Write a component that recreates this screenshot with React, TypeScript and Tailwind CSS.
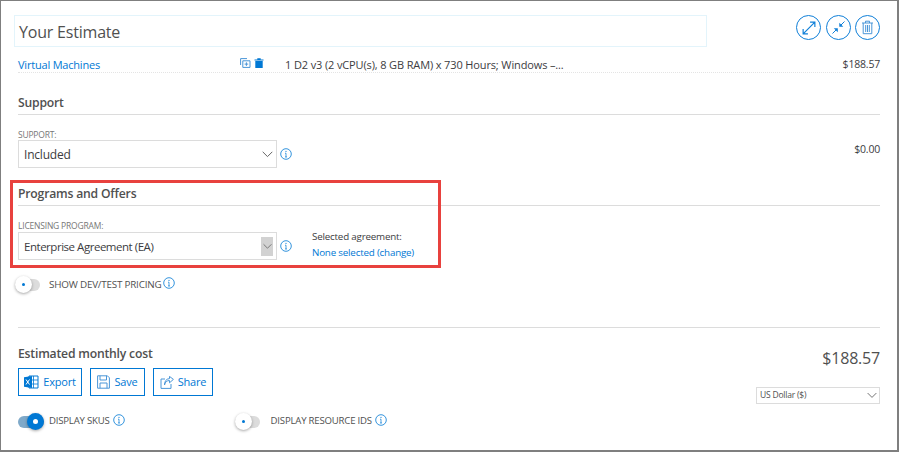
import React from "react";

function Info({ className = "" }: { className?: string }) {
  return (
    <svg viewBox="0 0 12 12" className={`w-[12px] h-[12px] shrink-0 ${className}`} fill="none" stroke="#0078d4" strokeWidth="0.8">
      <circle cx="6" cy="6" r="5.3" />
      <path d="M6 5.2V9M5 9h2M5 5.2h1" strokeWidth="0.7" />
      <circle cx="6" cy="3.3" r="0.6" fill="#0078d4" stroke="none" />
    </svg>
  );
}

function Chevron({ w = 11 }: { w?: number }) {
  return (
    <svg width={w} height="7" viewBox="0 0 11 7" fill="none" stroke="#666" strokeWidth="1">
      <path d="M0.7 0.8 5.5 5.6 10.3 0.8" />
    </svg>
  );
}

function Select({ text, highlighted = false }: { text: string; highlighted?: boolean }) {
  return (
    <div className="w-[259px] h-[28px] border-[1.5px] border-[#dcdcdc] flex items-center justify-between pl-[5px] pr-[3px] text-[#3c3c41] bg-white">
      {highlighted ? (
        <span className="text-[11.5px] tracking-[-0.47px] pt-[1px]">{text}</span>
      ) : (
        <span className="text-[12px] pt-[2px]">{text}</span>
      )}
      {highlighted ? (
        <span className="w-[12px] h-[19px] bg-[#d2d2d2] flex items-center justify-center"><Chevron w={9} /></span>
      ) : (
        <span className="w-[12px] flex items-center justify-center"><Chevron /></span>
      )}
    </div>
  );
}

function Toggle({ on = false }: { on?: boolean }) {
  if (on) {
    return (
      <span className="relative block w-[26px] h-[12px] rounded-full bg-[#7fa9c9] shrink-0">
        <span className="absolute right-0 top-[-3px] w-[17px] h-[17px] rounded-full bg-[#0078d4] shadow-[0_1px_3px_rgba(0,0,0,0.35)] flex items-center justify-center">
          <span className="w-[5px] h-[5px] rounded-full bg-white" />
        </span>
      </span>
    );
  }
  return (
    <span className="relative block w-[25px] h-[12px] rounded-full bg-[#dcdcdc] shrink-0">
      <span className="absolute left-0 top-[-3px] w-[17px] h-[17px] rounded-full bg-white shadow-[0_1px_3px_rgba(0,0,0,0.35)] flex items-center justify-center">
        <span className="w-[3px] h-[3px] rounded-full bg-[#0078d4]" />
      </span>
    </span>
  );
}

function Circle({ children }: { children: React.ReactNode }) {
  return (
    <span className="w-[25px] h-[25px] rounded-full border border-[#0f7fd8] flex items-center justify-center shrink-0">
      {children}
    </span>
  );
}

function Btn({ w, icon, label }: { w: string; icon: React.ReactNode; label: string }) {
  return (
    <div className={`${w} h-[28px] border-[1.5px] border-[#0078d4] flex items-center justify-center gap-[4px] text-[11px] text-[#0078d4]`}>
      {icon}
      <span>{label}</span>
    </div>
  );
}

export default function App() {
  return (
    <div
      className="w-[899px] h-[452px] border-t border-l border-b-2 border-r-2 border-[#7f7f7f] bg-white relative overflow-hidden pl-[17px] pr-[17px] text-[#3c3c41]"
      style={{ fontFamily: '"Open Sans", "Noto Sans", sans-serif', letterSpacing: "-0.2px" }}
    >
      {/* title row */}
      <div className="flex items-start h-[47px] pt-[14px]">
        <div className="ml-[-4px] w-[693px] h-[32px] border border-[#e3f4fb] flex items-center pl-[4px] pt-[1px] text-[16px] text-[#505050]">
          Your Estimate
        </div>
        <div className="ml-auto flex">
          <Circle>
            <svg width="16" height="16" viewBox="0 0 15 15" fill="none" stroke="#0f7fd8" strokeWidth="1.1">
              <path d="M2 13 13 2M8.5 2H13V6.5M2 8.5V13H6.5" />
            </svg>
          </Circle>
          <span className="w-[5px]" />
          <Circle>
            <svg width="15" height="15" viewBox="0 0 15 15" fill="none" stroke="#0f7fd8" strokeWidth="1">
              <path d="M1.5 13.5 5.5 9.5M13.5 1.5 9.5 5.5" />
              <path d="M2.8 8.3H6.8V12.3Z M8.3 2.8V6.8H12.3Z" fill="#0f7fd8" stroke="none" />
            </svg>
          </Circle>
          <span className="w-[4px]" />
          <Circle>
            <svg width="13" height="15" viewBox="0 0 13 15" fill="none" stroke="#4a96d8" strokeWidth="1">
              <path d="M1 3H12M4.5 3V1.2H8.5V3M2.2 3V13.7H10.8V3M4.7 5V12M6.5 5V12M8.3 5V12" />
            </svg>
          </Circle>
        </div>
      </div>

      {/* virtual machines row */}
      <div className="mt-[7px] h-[18px] pt-[2px] border-b border-dotted border-[#e4e4e4] flex items-center text-[11px] leading-none">
        <span className="w-[222px] text-[#0078d4]">Virtual Machines</span>
        <span className="w-[45px] flex items-center gap-[3px] mt-[-4px]">
          <svg width="11" height="10" viewBox="0 0 11 10" fill="none" stroke="#4a96d8" strokeWidth="1">
            <path d="M7 .6H.6V7M2.8 2.8H10V9.4H2.8ZM6.4 4.3V7.9M4.6 6.1H8.2" />
          </svg>
          <svg width="10" height="10" viewBox="0 0 10 10" fill="#0078d4">
            <path d="M.5 1.5H3.3V.3H6.7V1.5H9.5V2.5H.5ZM1.3 3H8.7V10H1.3Z" />
          </svg>
        </span>
        <span className="tracking-[-0.13px]">1 D2 v3 (2 vCPU(s), 8 GB RAM) x 730 Hours; Windows –...</span>
        <span className="ml-auto text-[10.5px]">$188.57</span>
      </div>

      {/* support */}
      <h2 className="mt-[20px] h-[22px] border-b border-[#dcdcdc] text-[12.2px] font-semibold leading-[20px] text-[#505050]">Support</h2>
      <div className="flex">
        <div>
          <div className="mt-[14px] h-[11px] text-[8.5px] leading-[11px] text-[#777]">SUPPORT:</div>
          <div className="flex items-center gap-[3px]">
            <Select text="Included" />
            <Info />
          </div>
        </div>
        <span className="ml-auto mt-[26px] text-[10.5px] leading-[16px]">$0.00</span>
      </div>

      {/* programs */}
      <h2 className="mt-[16px] h-[22px] border-b border-[#dcdcdc] text-[12.2px] font-semibold leading-[20px] text-[#505050]">Programs and Offers</h2>
      <div className="mt-[14px] h-[11px] text-[8.5px] leading-[11px] text-[#777]">LICENSING PROGRAM:</div>
      <div className="flex items-center">
        <Select text="Enterprise Agreement (EA)" highlighted />
        <Info className="ml-[3px]" />
        <div className="ml-[20px] mt-[-2px] text-[9.8px] leading-[16px]">
          <div>Selected agreement:</div>
          <div className="text-[#0078d4]">None selected (change)</div>
        </div>
      </div>
      <div className="mt-[15px] h-[17px] ml-[-3px] flex items-center">
        <Toggle />
        <span className="ml-[9px] text-[9.85px] text-[#505050]">SHOW DEV/TEST PRICING</span>
        <Info className="ml-[2px] mt-[-3px]" />
      </div>

      {/* summary */}
      <div className="mt-[34px] border-t border-[#dcdcdc] flex justify-between">
        <div>
          <div className="mt-[16px] h-[20px] text-[12.2px] font-semibold leading-[19px] text-[#505050]">Estimated monthly cost</div>
          <div className="mt-[4px] flex gap-[8px]">
            <Btn
              w="w-[64px]"
              label="Export"
              icon={
                <svg width="15" height="14" viewBox="0 0 15 14">
                  <path d="M5 1H14V13H5Z" fill="none" stroke="#0078d4" strokeWidth="1" />
                  <path d="M9.5 1V13M5 5H14M5 9H14" stroke="#0078d4" strokeWidth="0.8" />
                  <path d="M0 2.2 8 1V13L0 11.8Z" fill="#0078d4" />
                  <path d="M2 4.5 5.5 9.5M5.5 4.5 2 9.5" stroke="#fff" strokeWidth="1" />
                </svg>
              }
            />
            <Btn
              w="w-[55px]"
              label="Save"
              icon={
                <svg width="13" height="14" viewBox="0 0 13 14" fill="none" stroke="#4a96d8" strokeWidth="1">
                  <path d="M.6.8H10.4L12.4 2.8V13.2H.6ZM3 .8V5H9.5V.8M3 13.2V8H10V13.2" />
                </svg>
              }
            />
            <Btn
              w="w-[60px]"
              label="Share"
              icon={
                <svg width="14" height="13" viewBox="0 0 14 13" fill="none" stroke="#4a96d8" strokeWidth="1">
                  <path d="M5 3H1V12.4H11V8M4.5 9C5 6 7 4.5 9.5 4.5V6.8L13.4 3.4 9.5.4V2.6C6 2.8 4.5 5.5 4.5 9Z" />
                </svg>
              }
            />
          </div>
        </div>
        <div className="flex flex-col items-end">
          <div className="mt-[18px] text-[16px] leading-[24px] text-[#505050]">$188.57</div>
          <div className="mt-[17px] w-[124px] h-[17px] border-[1.5px] border-[#dcdcdc] flex items-center justify-between pl-[3px] pr-[2px] text-[8.5px] text-[#505050]">
            <span>US Dollar ($)</span>
            <Chevron w={10} />
          </div>
        </div>
      </div>

      <div className="mt-[9px] flex items-center h-[17px] text-[9.6px] text-[#505050]">
        <Toggle on />
        <span className="ml-[5px]">DISPLAY SKUS</span>
        <Info className="ml-[3px] mt-[-3px]" />
        <span className="ml-[110px]"><Toggle /></span>
        <span className="ml-[11px]">DISPLAY RESOURCE IDS</span>
        <Info className="ml-[3px] mt-[-3px]" />
      </div>

      {/* red highlight */}
      <div className="absolute left-[9px] top-[179px] w-[431px] h-[88px] border-[3px] border-[#e8413e] pointer-events-none" />
    </div>
  );
}
